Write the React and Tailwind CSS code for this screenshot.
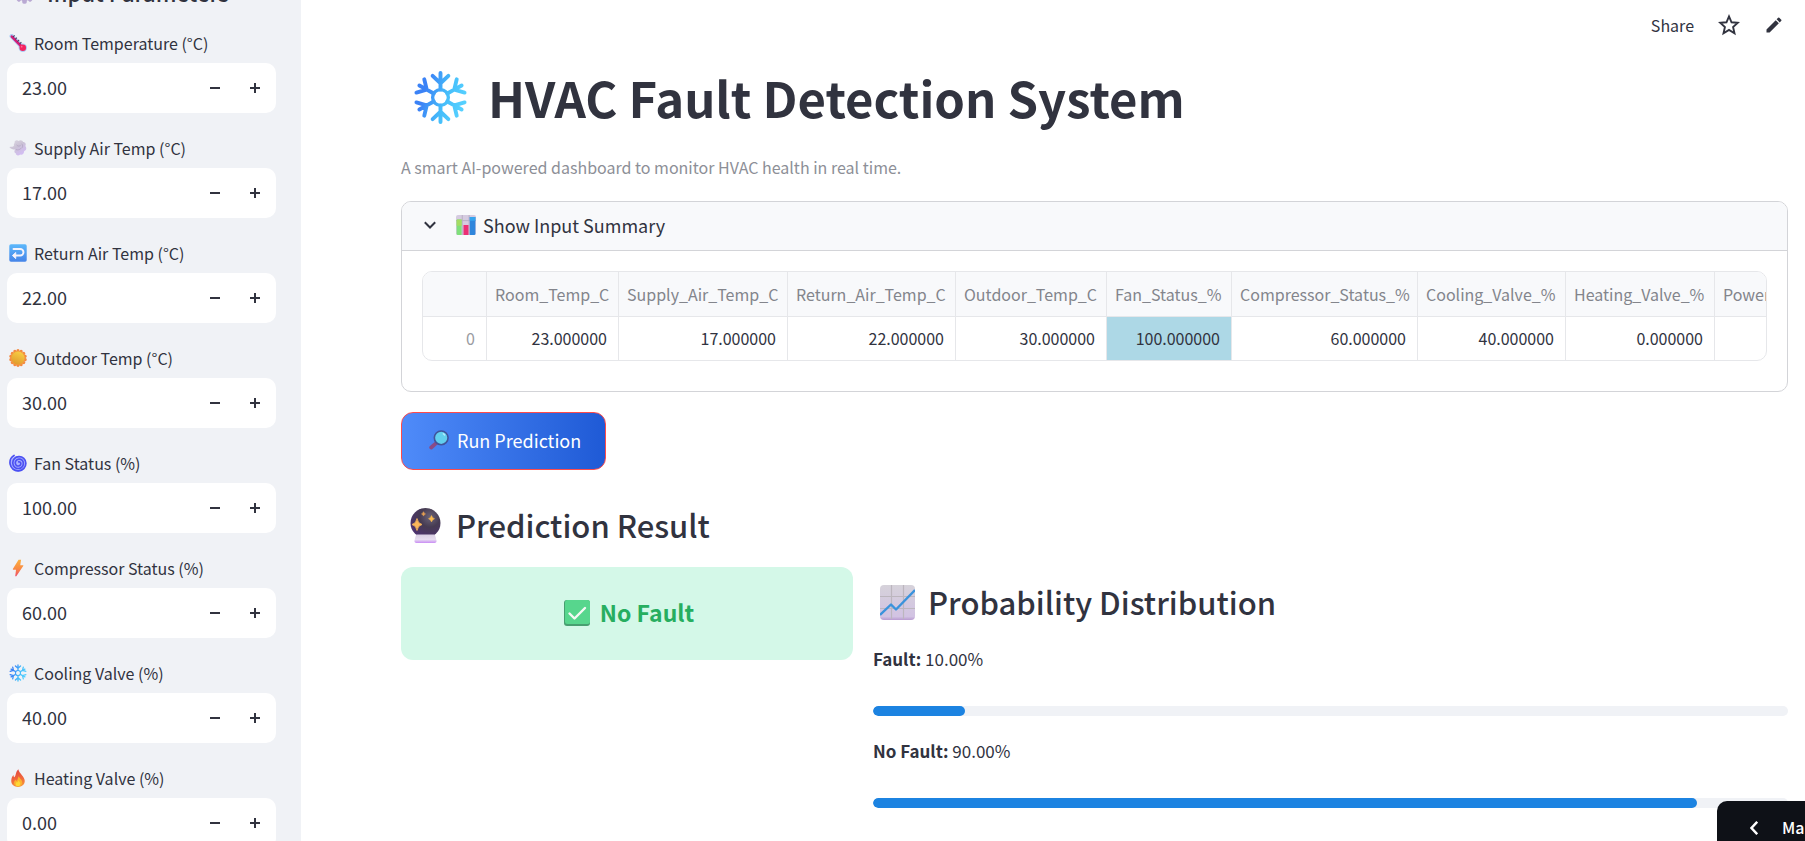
import { useId, useState } from "react";

const FONT = "font-['Noto_Sans_CJK_JP','Noto_Sans_CJK_SC',sans-serif]";

function Snowflake({ className }) {
  const id = useId();
  return (
    <svg viewBox="0 0 54 56" className={className} fill="none" aria-hidden="true">
      <defs>
        <linearGradient id={id} gradientUnits="userSpaceOnUse" x1="4" y1="20" x2="50" y2="34">
          <stop offset="0.15" stopColor="#3b82f6" />
          <stop offset="0.6" stopColor="#45bdfa" />
          <stop offset="1" stopColor="#55d0ff" />
        </linearGradient>
      </defs>
      <g stroke={`url(#${id})`} strokeWidth="4" strokeLinecap="round" strokeLinejoin="round">
        <circle cx="27" cy="28" r="8" strokeWidth="3.4" />
        <path d="M27 20V3M19 6L27 13.5L35 6" />
        <path d="M27 36V53M19 50L27 42.500L35 50" />
        <path d="M33.900 24L41 20M43.500 9.500L41 20M51.500 23L41 20M41 20L48.500 15.800" />
        <path d="M20.100 24L13 20M10.500 9.500L13 20M2.500 23L13 20M13 20L5.500 15.800" />
        <path d="M33.900 32L41 36M43.500 46.500L41 36M51.500 33L41 36M41 36L48.500 40.200" />
        <path d="M20.100 32L13 36M10.500 46.500L13 36M2.500 33L13 36M13 36L5.500 40.200" />
      </g>
    </svg>
  );
}

function Gear({ className }) {
  const teeth = [0, 45, 90, 135, 180, 225, 270, 315];
  return (
    <svg viewBox="0 0 32 32" className={className} aria-hidden="true">
      {teeth.map((a) => (
        <rect key={a} x="12.500" y="0.500" width="7" height="9" rx="2.500" fill="#b9a9d3" transform={`rotate(${a} 16 16)`} />
      ))}
      <circle cx="16" cy="16" r="9" fill="none" stroke="#b9a9d3" strokeWidth="5" />
    </svg>
  );
}

function Thermometer({ className }) {
  return (
    <svg viewBox="0 0 32 32" className={className} aria-hidden="true">
      <path d="M5 4L24 24" stroke="#a9cdf5" strokeWidth="8" strokeLinecap="round" />
      <circle cx="24.500" cy="24.500" r="7.500" fill="#a9cdf5" />
      <path d="M5 4.500L24 24" stroke="#d41d78" strokeWidth="4.500" strokeLinecap="round" />
      <circle cx="24.500" cy="24.500" r="5.800" fill="#f4225f" />
      <path d="M10 2.500l-3 3M14 6.500l-3 3M18 10.500l-3 3M22 14.500l-3 3" stroke="#4d3a5c" strokeWidth="1.800" />
      <circle cx="22.500" cy="22.500" r="1.500" fill="#ff6d94" />
    </svg>
  );
}

function WindFace({ className }) {
  const id = useId();
  return (
    <svg viewBox="0 0 32 32" className={className} aria-hidden="true">
      <defs>
        <linearGradient id={id} x1="0" y1="0" x2="0.700" y2="1">
          <stop offset="0" stopColor="#dedae3" />
          <stop offset="0.500" stopColor="#cbc2d6" />
          <stop offset="1" stopColor="#d3bcf5" />
        </linearGradient>
      </defs>
      <path
        d="M10 7c-1-4 4-6 7-3.500 3-3 8-1 8 2 4 0 6 4 4 7 3 3 2 8-2 9 0 5-4 8-7 6-3 3-8 2-8-2-3-1-3-5-1-7-4 0-8-1-10.500-4.500 4 0 7.500-.5 8.500-2.500-1-1 0-4 1-4.500z"
        fill={`url(#${id})`}
      />
      <path d="M14 11c2 2 4 2 6 1M13 19c3 1 6 0 8-2M23 9c2 2 2 5 0 7" stroke="#b3a5c2" strokeWidth="1.400" fill="none" strokeLinecap="round" />
    </svg>
  );
}

function ReturnArrow({ className }) {
  const id = useId();
  return (
    <svg viewBox="0 0 32 32" className={className} aria-hidden="true">
      <defs>
        <linearGradient id={id} x1="0" y1="0" x2="0" y2="1">
          <stop offset="0" stopColor="#5cb8fb" />
          <stop offset="1" stopColor="#4584e8" />
        </linearGradient>
      </defs>
      <rect x="0.500" y="0.500" width="31" height="31" rx="3" fill={`url(#${id})`} />
      <path d="M8 9h12a5.500 5.500 0 0 1 0 11.500H9" fill="none" stroke="#f6f3fb" strokeWidth="3.400" strokeLinecap="round" />
      <path d="M12 15L6 20.500L12 26z" fill="#f6f3fb" stroke="#f6f3fb" strokeWidth="1.500" strokeLinejoin="round" />
    </svg>
  );
}

function Sun({ className }) {
  const id = useId();
  const rays = Array.from({ length: 14 }, (_, i) => (i * 360) / 14);
  return (
    <svg viewBox="0 0 32 32" className={className} aria-hidden="true">
      <defs>
        <linearGradient id={id} x1="0.700" y1="0" x2="0.300" y2="1">
          <stop offset="0" stopColor="#f8cf45" />
          <stop offset="1" stopColor="#e09a2c" />
        </linearGradient>
      </defs>
      {rays.map((a) => (
        <circle key={a} cx="16" cy="3" r="2.800" fill="#f3893f" transform={`rotate(${a} 16 16)`} />
      ))}
      <circle cx="16" cy="16" r="13" fill="#f3983f" />
      <circle cx="16" cy="16" r="11.500" fill={`url(#${id})`} />
    </svg>
  );
}

function Cyclone({ className }) {
  return (
    <svg viewBox="0 0 32 32" className={className} fill="none" aria-hidden="true">
      <circle cx="16" cy="17.500" r="14" fill="#aab2ff" />
      <path
        d="M9 2.500C3 6 1 12 2 18c1.500 8 8 12.500 15 12 8-.6 13-7 13-13.500C30 9 24 4.500 17.500 4.800 11 5 6.500 10 6.700 16c.2 6 5 10 10 9.800 5.500-.2 9-4.500 8.800-9.300C25.300 12 22 9 17.800 9.200c-4 .2-6.800 3-6.600 6.800.2 3.500 2.800 5.500 5.600 5.300 2.700-.2 4.400-2.200 4.200-4.500-.2-2-2-3.300-3.700-2.800"
        stroke="#4b50f2"
        strokeWidth="3"
        strokeLinecap="round"
      />
    </svg>
  );
}

function Bolt({ className }) {
  const id = useId();
  return (
    <svg viewBox="0 0 32 32" className={className} aria-hidden="true">
      <defs>
        <linearGradient id={id} x1="0.500" y1="0" x2="0.500" y2="1">
          <stop offset="0" stopColor="#fbb03f" />
          <stop offset="0.550" stopColor="#f98a45" />
          <stop offset="1" stopColor="#ee4f6b" />
        </linearGradient>
      </defs>
      <path d="M17 1.500h4.500L20 11h4.500c1 0 1.300.8.800 1.600L13 30.500h-2l1.500-11.500H8c-1 0-1.500-.8-1-1.700z" fill={`url(#${id})`} />
    </svg>
  );
}

function Fire({ className }) {
  const id = useId();
  return (
    <svg viewBox="0 0 32 32" className={className} aria-hidden="true">
      <defs>
        <linearGradient id={id} x1="0.400" y1="0" x2="0.600" y2="1">
          <stop offset="0" stopColor="#e2463f" />
          <stop offset="0.600" stopColor="#f26b3c" />
          <stop offset="1" stopColor="#f79a3a" />
        </linearGradient>
      </defs>
      <path d="M16.500 0.500c1 5 4 7 6.500 10.500 2.500 3 5 6 5 10.500C28 28 22.500 32 16 32S4 28 4 21c0-5 2-8.500 4-10.500 0 2 .5 3.500 1.500 4C13 12 11 6 16.500 0.500z" fill={`url(#${id})`} />
      <path d="M17.500 13c1 4 6 6 6 11 0 4-3 7-7.500 7S9 28 9 24.500c0-3 1.500-4 2.500-6 .5 1.500 1 2 2 2.500 2.500-2 1.500-4 4-8z" fill="#fbb22f" />
      <path d="M17 20c1 3 3 3 3 6 0 2.500-1.500 4.500-4 4.500s-4-1.500-4-4c0-2 1.500-2.500 2-4 .5 1 1 1 1.500 1 1-1 1-2 1.500-3.500z" fill="#fdd835" />
    </svg>
  );
}

function BarChart({ className }) {
  return (
    <svg viewBox="0 0 32 32" className={className} aria-hidden="true">
      <rect width="32" height="32" rx="3" fill="#d5cbe0" />
      <path d="M0 9h32M10 0v32M21 0v32" stroke="#b7adc2" strokeWidth="1.500" />
      <path d="M2 7h7v25H3a2 2 0 0 1-2-2V8z" fill="#7fe07a" />
      <path d="M2 7h7v10H1V8z" fill="#a5dc63" />
      <path d="M12 16h8v16h-8z" fill="#ec2f74" />
      <path d="M22 3h9v27a2 2 0 0 1-2 2h-7z" fill="#2f86dc" />
      <path d="M22 3h9v6h-9z" fill="#36a4ee" />
    </svg>
  );
}

function Magnifier({ className }) {
  return (
    <svg viewBox="0 0 32 32" className={className} aria-hidden="true">
      <path d="M3.500 28L12 20.500" stroke="#8b4a86" strokeWidth="6" strokeLinecap="round" />
      <circle cx="19.500" cy="12.500" r="11" fill="#62cfee" stroke="#40549a" strokeWidth="2.600" />
      <path d="M23 6l2 2" stroke="#b5ecfb" strokeWidth="2.500" strokeLinecap="round" />
    </svg>
  );
}

function CrystalBall({ className }) {
  const id = useId();
  return (
    <svg viewBox="0 0 35 35" className={className} aria-hidden="true">
      <defs>
        <radialGradient id={`${id}g`} cx="0.650" cy="0.300" r="0.750">
          <stop offset="0" stopColor="#6b6478" />
          <stop offset="0.450" stopColor="#463b52" />
          <stop offset="1" stopColor="#4d3270" />
        </radialGradient>
        <linearGradient id={`${id}b`} x1="0" y1="0" x2="0" y2="1">
          <stop offset="0" stopColor="#d9cfe3" />
          <stop offset="0.600" stopColor="#e6dcef" />
          <stop offset="1" stopColor="#c98cf5" />
        </linearGradient>
      </defs>
      <circle cx="17.500" cy="15" r="15" fill={`url(#${id}g)`} />
      <path d="M8.500 26.500h18c1 1.500 1.500 4 2 6 .3 1.500-.5 2.500-2 2.500h-18c-1.500 0-2.300-1-2-2.500.5-2 1-4.500 2-6z" fill={`url(#${id}b)`} />
      <path d="M9 10.500q.8 5 5 6q-4.200 1-5 6q-.8-5-5-6q4.200-1 5-6z" fill="#fbb75a" stroke="#fbb75a" strokeWidth="0.800" strokeLinejoin="round" />
      <path d="M23.500 7.500q.7 2.500 3 3.200q-2.300.7-3 3.200q-.7-2.500-3-3.200q2.300-.7 3-3.200z" fill="#f9b94f" stroke="#f9b94f" strokeWidth="0.500" />
      <path d="M15.500 3.700q.5 1.700 2 2.200q-1.500.5-2 2.200q-.5-1.700-2-2.200q1.500-.5 2-2.200z" fill="#e6a052" stroke="#e6a052" strokeWidth="0.500" />
    </svg>
  );
}

function LineChart({ className }) {
  const id = useId();
  return (
    <svg viewBox="0 0 35 35" className={className} aria-hidden="true">
      <defs>
        <linearGradient id={id} x1="0" y1="0" x2="0" y2="1">
          <stop offset="0" stopColor="#d6d2da" />
          <stop offset="0.900" stopColor="#d2c3e3" />
          <stop offset="1" stopColor="#b99bd0" />
        </linearGradient>
      </defs>
      <rect width="35" height="35" rx="4" fill={`url(#${id})`} />
      <path d="M11.500 0v34M23.500 0v34M0 11.500h35M0 23.500h35" stroke="#bcb6be" strokeWidth="1.200" />
      <path d="M0 30L11 19.500L16 24.500L35 5" fill="none" stroke="#3b93dc" strokeWidth="2.400" strokeLinejoin="round" />
    </svg>
  );
}

function CheckBadge({ className }) {
  return (
    <svg viewBox="0 0 26 26" className={className} aria-hidden="true">
      <rect width="26" height="26" rx="3" fill="#479f70" />
      <rect x="1" width="25" height="24" rx="2.500" fill="#57d68d" />
      <path d="M5.500 13.500L10.500 18.500L21 8" fill="none" stroke="#f5f9f5" strokeWidth="2.400" strokeLinecap="round" strokeLinejoin="round" />
    </svg>
  );
}

const FIELDS = [
  ["room", "Room Temperature (°C)", "23.00", Thermometer],
  ["supply", "Supply Air Temp (°C)", "17.00", WindFace],
  ["return", "Return Air Temp (°C)", "22.00", ReturnArrow],
  ["outdoor", "Outdoor Temp (°C)", "30.00", Sun],
  ["fan", "Fan Status (%)", "100.00", Cyclone],
  ["compressor", "Compressor Status (%)", "60.00", Bolt],
  ["cooling", "Cooling Valve (%)", "40.00", Snowflake],
  ["heating", "Heating Valve (%)", "0.00", Fire],
];

function NumberField({ id, label, initial, Icon }) {
  const [value, setValue] = useState(initial);
  const step = (d) => setValue((v) => (Number(v) + d).toFixed(2));
  return (
    <div className="flex flex-col gap-1.5">
      <label htmlFor={id} className="flex items-center gap-[7px] pl-0.5 text-base leading-7">
        <Icon className="size-[18px]" />
        {label}
      </label>
      <div className="flex h-[50px] items-stretch overflow-hidden rounded-[10px] bg-white pr-px">
        <input
          id={id}
          value={value}
          onChange={(e) => setValue(e.target.value)}
          className="min-w-0 flex-1 bg-transparent pb-0.5 pl-[15px] text-lg outline-none"
        />
        <button type="button" aria-label={`Decrease ${label}`} onClick={() => step(-1)} className="flex w-10 items-center justify-center">
          <svg viewBox="0 0 10 10" className="size-2.5" aria-hidden="true">
            <path d="M0 5h10" stroke="currentColor" strokeWidth="2" />
          </svg>
        </button>
        <button type="button" aria-label={`Increase ${label}`} onClick={() => step(1)} className="flex w-10 items-center justify-center">
          <svg viewBox="0 0 10 10" className="size-2.5" aria-hidden="true">
            <path d="M0 5h10M5 0v10" stroke="currentColor" strokeWidth="2" />
          </svg>
        </button>
      </div>
    </div>
  );
}

const COLUMNS = [
  ["Room_Temp_C", "23.000000", "w-[132px]"],
  ["Supply_Air_Temp_C", "17.000000", "w-[169px]"],
  ["Return_Air_Temp_C", "22.000000", "w-[168px]"],
  ["Outdoor_Temp_C", "30.000000", "w-[151px]"],
  ["Fan_Status_%", "100.000000", "w-[125px]"],
  ["Compressor_Status_%", "60.000000", "w-[186px]"],
  ["Cooling_Valve_%", "40.000000", "w-[148px]"],
  ["Heating_Valve_%", "0.000000", "w-[149px]"],
  ["Power_kW", "5.000000", "w-[150px]"],
];

function SummaryTable() {
  return (
    <div className="overflow-hidden rounded-[10px] border border-[#e6e7ea]">
      <table className="w-[1442px] table-fixed border-separate border-spacing-0 text-base leading-6 whitespace-nowrap">
        <colgroup>
          <col className="w-16" />
          {COLUMNS.map(([name, , width]) => (
            <col key={name} className={width} />
          ))}
        </colgroup>
        <thead>
          <tr className="h-[45px] bg-[#f8f9fb] text-left text-[#83858c]">
            <th aria-label="Row" className="border-r border-b border-[#e6e7ea] p-0" />
            {COLUMNS.map(([name]) => (
              <th key={name} scope="col" className="border-r border-b border-[#e6e7ea] p-0 pl-2 font-normal">
                {name}
              </th>
            ))}
          </tr>
        </thead>
        <tbody>
          <tr className="h-[43px] text-right">
            <th scope="row" className="border-r border-[#e6e7ea] p-0 pr-[11px] pb-0.5 text-right font-normal text-[#9a9ba1]">
              0
            </th>
            {COLUMNS.map(([name, value]) => (
              <td
                key={name}
                className={`border-r border-[#e6e7ea] p-0 pr-[11px] pb-0.5 ${name === "Fan_Status_%" ? "bg-[#add8e6]" : ""}`}
              >
                {value}
              </td>
            ))}
          </tr>
        </tbody>
      </table>
    </div>
  );
}

function Probability({ label, value, percent }) {
  return (
    <div>
      <p className="text-[17px] leading-8">
        <strong className="font-bold">{label}:</strong> {value}
      </p>
      <div
        role="progressbar"
        aria-label={label}
        aria-valuenow={percent}
        aria-valuemin={0}
        aria-valuemax={100}
        className="mt-[31px] h-2.5 overflow-hidden rounded-full bg-[#f0f2f6]"
      >
        <div className="h-full rounded-full bg-[#1c83e1]" style={{ width: `${percent}%` }} />
      </div>
    </div>
  );
}

export default function App() {
  const [open, setOpen] = useState(true);
  return (
    <div className={`flex h-screen overflow-hidden bg-white text-[#31333f] ${FONT}`}>
      <aside className="w-[301px] shrink-0 overflow-hidden bg-[#f0f2f6] pr-[25px] pl-[7px]">
        <div className="-mt-6">
          <h2 className="flex items-end gap-3 pl-[7px] text-[22px] leading-8 font-medium">
            <Gear className="mb-1 size-[21px]" />
            Input Parameters
          </h2>
          <form className="mt-[21px] flex flex-col gap-[21px]">
            {FIELDS.map(([id, label, initial, Icon]) => (
              <NumberField key={id} id={id} label={label} initial={initial} Icon={Icon} />
            ))}
          </form>
        </div>
      </aside>

      <div className="min-w-0 flex-1 overflow-hidden">
        <header className="flex h-[49px] items-center justify-end pr-[21px]">
          <button type="button" className="text-base leading-6">
            Share
          </button>
          <button type="button" aria-label="Favorite" className="ml-6">
            <svg viewBox="0 0 20 20" className="size-[22px]" fill="none" stroke="currentColor" strokeWidth="1.700" strokeLinejoin="miter" aria-hidden="true">
              <path d="M10 2.200L12.300 7.500L18 8L13.700 11.800L15 17.500L10 14.500L5 17.500L6.300 11.800L2 8L7.700 7.500Z" />
            </svg>
          </button>
          <button type="button" aria-label="Edit" className="ml-6">
            <svg viewBox="0 0 24 24" className="size-5" fill="currentColor" aria-hidden="true">
              <path d="M3 17.250V21h3.750L17.810 9.940l-3.750-3.750L3 17.250zM20.710 7.040a1 1 0 0 0 0-1.410l-2.340-2.340a1 1 0 0 0-1.410 0l-1.830 1.830 3.750 3.750 1.830-1.830z" />
            </svg>
          </button>
        </header>

        <main className="pr-[17px] pl-[100px]">
          <h1 className="mt-4 flex items-center gap-5 pl-3 text-[49px] leading-[64px] font-bold">
            <Snowflake className="size-[55px]" />
            HVAC Fault Detection System
          </h1>
          <p className="mt-6 text-base leading-7 text-[#8d8f97]">
            A smart AI-powered dashboard to monitor HVAC health in real time.
          </p>

          <section className="mt-5 overflow-hidden rounded-[10px] border border-[#d3d4d8]">
            <button
              type="button"
              aria-expanded={open}
              onClick={() => setOpen(!open)}
              className="flex h-12 w-full items-center bg-[#f8f9fb] pb-0.5 pl-[22px] text-left text-lg"
            >
              <svg viewBox="0 0 12 12" className="mr-5 size-3" fill="none" stroke="currentColor" strokeWidth="2" aria-hidden="true">
                <path d="M0.800 3.300L6 8.500L11.200 3.300" />
              </svg>
              <BarChart className="mr-[7px] size-5" />
              Show Input Summary
            </button>
            {open && (
              <div className="border-t border-[#d3d4d8] px-5 pt-5 pb-[30px]">
                <SummaryTable />
              </div>
            )}
          </section>

          <button
            type="button"
            className="mt-5 flex h-[58px] items-center gap-2 rounded-xl border border-[#ff4b4b] bg-linear-to-r from-[#4f8bf9] to-[#1f5ad6] pr-6 pb-0.5 pl-[27px] text-lg font-normal text-white"
          >
            <Magnifier className="size-5" />
            Run Prediction
          </button>

          <h3 className="mt-[34px] flex items-center gap-[13px] pl-[7px] text-[31px] leading-[42px] font-medium">
            <CrystalBall className="size-[35px]" />
            Prediction Result
          </h3>

          <div className="mt-[21px] grid grid-cols-[452fr_915fr] items-start gap-5">
            <div className="flex h-[93px] items-center justify-center gap-2.5 rounded-xl bg-[#d4f8e8] pb-0.5 pl-1 text-[23px] font-bold text-[#27ae60]">
              <CheckBadge className="size-[26px]" />
              No Fault
            </div>
            <section className="pt-[14px]">
              <h3 className="flex items-center gap-[13px] pl-[7px] text-[31px] leading-[42px] font-medium">
                <LineChart className="size-[35px]" />
                Probability Distribution
              </h3>
              <div className="mt-5 flex flex-col gap-[19px]">
                <Probability label="Fault" value="10.00%" percent={10} />
                <Probability label="No Fault" value="90.00%" percent={90} />
              </div>
            </section>
          </div>
        </main>
      </div>

      <button
        type="button"
        className="fixed right-0 bottom-0 flex h-10 w-[88px] items-start gap-6 overflow-hidden rounded-tl-[10px] bg-[#0e1117] pt-4 pl-[33px] text-base leading-5 font-medium whitespace-nowrap text-white"
      >
        <svg viewBox="0 0 8 14" className="mt-1 h-3.5 w-2 shrink-0" fill="none" stroke="currentColor" strokeWidth="2.400" aria-hidden="true">
          <path d="M7.200 0.800L1.500 7L7.200 13.200" />
        </svg>
        Manage app
      </button>
    </div>
  );
}
